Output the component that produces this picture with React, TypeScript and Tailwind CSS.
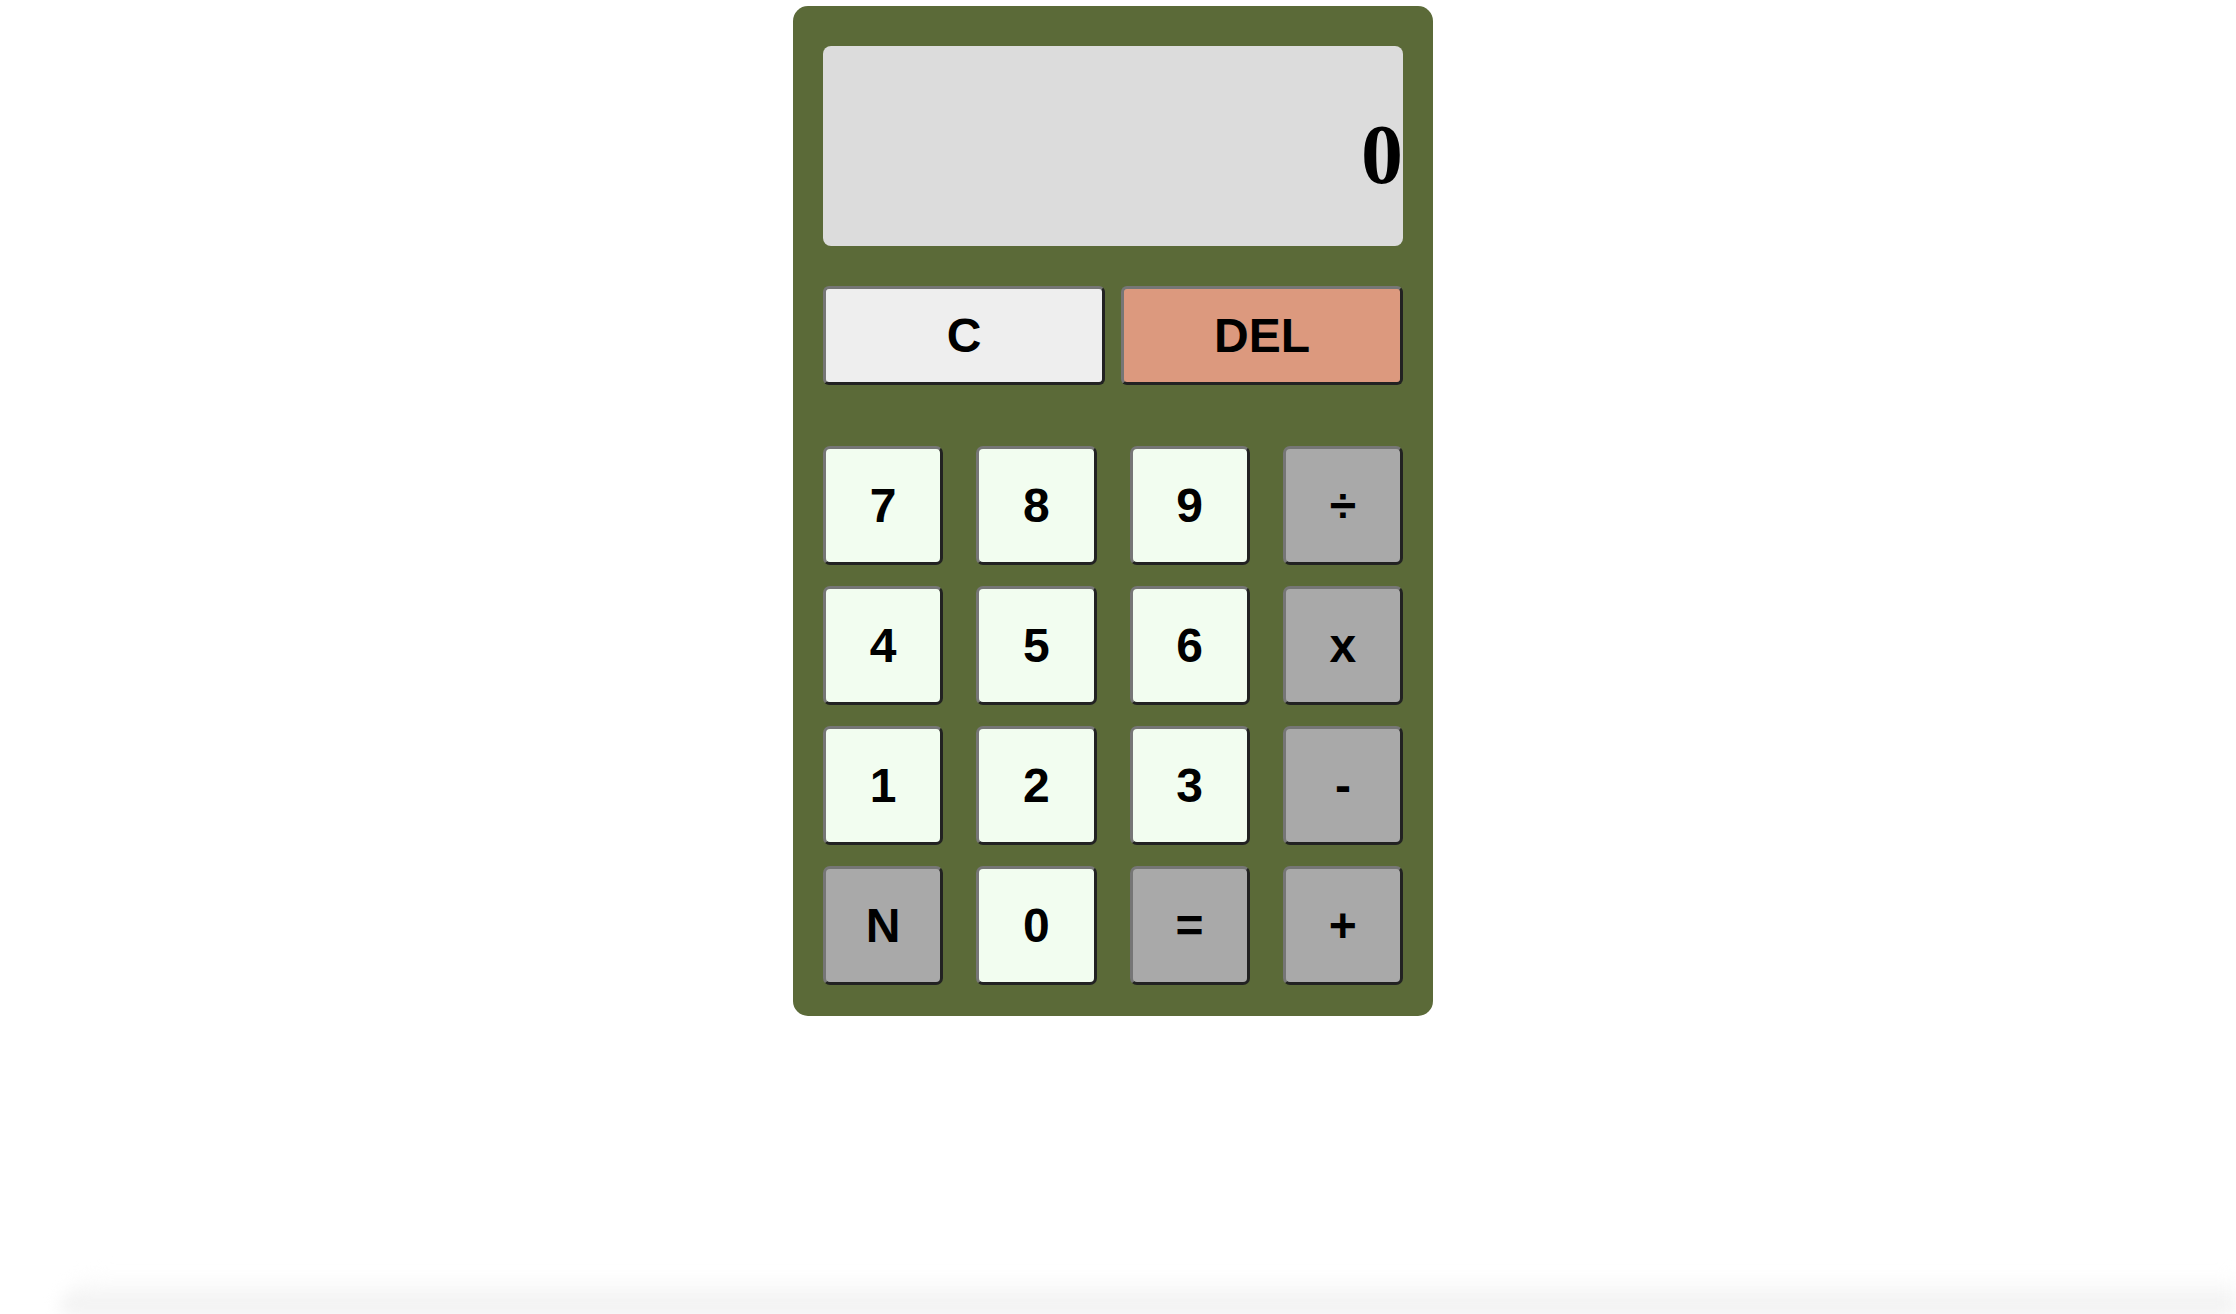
const keys = [
  { label: "7", op: false },
  { label: "8", op: false },
  { label: "9", op: false },
  { label: "÷", op: true },
  { label: "4", op: false },
  { label: "5", op: false },
  { label: "6", op: false },
  { label: "x", op: true },
  { label: "1", op: false },
  { label: "2", op: false },
  { label: "3", op: false },
  { label: "-", op: true },
  { label: "N", op: true },
  { label: "0", op: false },
  { label: "=", op: true },
  { label: "+", op: true },
];

const bevel =
  "border-[3px] border-t-[#767676] border-l-[#767676] border-r-[#222222] border-b-[#222222] font-['Liberation_Sans',Arial,sans-serif] font-bold text-black";

export default function App() {
  return (
    <div className="flex flex-col h-[1314px] bg-white">
      <div className="flex justify-center pr-[10px] pt-[6px]">
        <div className="flex flex-col w-[640px] bg-[#5b6a38] rounded-[15px] px-[30px] pt-[40px] pb-[31px]">
          <div className="flex items-end justify-end h-[200px] bg-[#dcdcdc] rounded-[8px] pb-[28px]">
            <span className="font-['Liberation_Serif','Times_New_Roman',serif] font-bold text-[84px] leading-normal text-black">
              0
            </span>
          </div>

          <div className="flex gap-[16px] mt-[40px]">
            <button className={`${bevel} flex-1 h-[99px] rounded-[6px] bg-[#eeeeee] text-[48px]`}>
              C
            </button>
            <button className={`${bevel} flex-1 h-[99px] rounded-[6px] bg-[#dc997e] text-[48px]`}>
              DEL
            </button>
          </div>

          <div className="grid grid-cols-4 gap-x-[33px] gap-y-[21px] mt-[61px]">
            {keys.map((k) => (
              <button
                key={k.label}
                className={`${bevel} h-[119px] rounded-[7px] text-[48px] ${
                  k.op ? "bg-[#a9a9a9]" : "bg-[#f2fdf0]"
                }`}
              >
                {k.label}
              </button>
            ))}
          </div>
        </div>
      </div>
      <div className="flex-1" />
      <div className="h-[40px] ml-[60px] rounded-tl-[40px] bg-gradient-to-b from-white to-[#eeeeee] blur-[8px]" />
    </div>
  );
}
